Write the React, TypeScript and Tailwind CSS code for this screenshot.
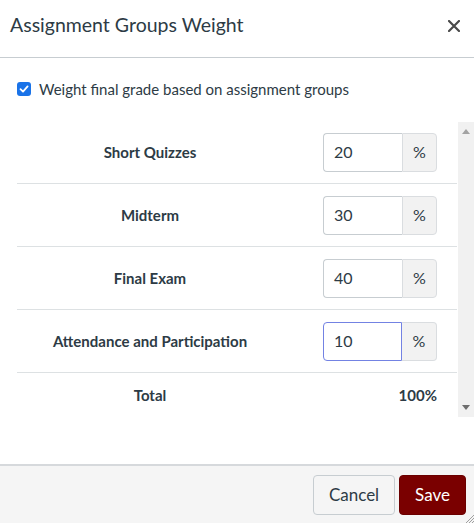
import React from "react";

const groups = [
  { name: "Short Quizzes", weight: "20" },
  { name: "Midterm", weight: "30" },
  { name: "Final Exam", weight: "40" },
  { name: "Attendance and Participation", weight: "10", focused: true },
];

function WeightInput({ value, focused }: { value: string; focused?: boolean }) {
  return (
    <div className="flex h-[39px]">
      <div
        className={
          focused
            ? "w-[79px] flex items-center pl-[10px] rounded-l-[4px] border border-[#7382e3] bg-white text-[16px] text-[#2d3b45]"
            : "w-[79px] flex items-center pl-[10px] rounded-l-[4px] border border-r-0 border-[#c7cdd1] bg-white text-[16px] text-[#2d3b45]"
        }
      >
        {value}
      </div>
      <div
        className={
          focused
            ? "w-[35px] flex items-center justify-center rounded-r-[4px] border border-l-0 border-[#dadde0] bg-[#f2f2f2] text-[16px] text-[#2d3b45]"
            : "w-[35px] flex items-center justify-center rounded-r-[4px] border border-[#dadde0] bg-[#f2f2f2] text-[16px] text-[#2d3b45]"
        }
      >
        %
      </div>
    </div>
  );
}

export default function App() {
  return (
    <div
      className="relative w-[474px] h-[523px] bg-white flex flex-col overflow-hidden text-[#2d3b45]"
      style={{ fontFamily: "Lato, 'Noto Sans', sans-serif" }}
    >
      {/* header */}
      <div className="h-[58px] shrink-0 flex items-start justify-between border-b border-[#c7cdd1] pl-[10px] pr-[14px] pt-[10px]">
        <h2 className="text-[19.5px] leading-[30px] font-normal">Assignment Groups Weight</h2>
        <svg width="12" height="12" viewBox="0 0 12 12" className="mt-[10px]">
          <path d="M1 1L11 11M11 1L1 11" stroke="#4a4a4a" strokeWidth="2.2" strokeLinecap="round" />
        </svg>
      </div>

      {/* checkbox */}
      <div className="h-[63px] shrink-0 flex items-center pl-[17px] pb-[1px]">
        <span className="w-[14px] h-[14px] rounded-[3px] bg-[#1a73e8] flex items-center justify-center">
          <svg width="10" height="10" viewBox="0 0 10 10">
            <path d="M1.5 5.2L4 7.6L8.6 2.4" stroke="white" strokeWidth="1.8" fill="none" strokeLinecap="round" strokeLinejoin="round" />
          </svg>
        </span>
        <span className="ml-[8px] text-[15px]">Weight final grade based on assignment groups</span>
      </div>

      {/* table with scrollbar */}
      <div className="flex h-[296px] shrink-0">
        <div className="w-[457px] pl-[17px]">
          {groups.map((g) => (
            <div key={g.name} className="h-[63px] flex items-center border-b border-[#dde1e3]">
              <div className="w-[266px] text-center font-bold text-[15px]">{g.name}</div>
              <div className="flex-1 flex justify-end pr-[20px]">
                <WeightInput value={g.weight} focused={g.focused} />
              </div>
            </div>
          ))}
          <div className="h-[44px] flex items-center">
            <div className="w-[266px] text-center font-bold text-[15px]">Total</div>
            <div className="flex-1 text-right pr-[20px] font-bold text-[15px]">100%</div>
          </div>
        </div>
        <div className="ml-[1px] mt-[1px] w-[16px] bg-[#f1f1f1] flex flex-col items-center justify-between py-[7px]">
          <svg width="8" height="5" viewBox="0 0 8 5">
            <path d="M0 5L4 0L8 5Z" fill="#a3a3a3" />
          </svg>
          <svg width="8" height="5" viewBox="0 0 8 5">
            <path d="M0 0L8 0L4 5Z" fill="#6e6e6e" />
          </svg>
        </div>
      </div>

      <div className="flex-1" />

      {/* footer */}
      <div className="h-[59px] shrink-0 border-t-2 border-[#d6d9dc] bg-[#f5f5f5] flex items-center justify-end gap-[4px] pr-[8px]">
        <button className="h-[40px] w-[82px] rounded-[4px] border border-[#c7cdd1] bg-[#f5f5f5] text-[17px] text-[#2d3b45]">
          Cancel
        </button>
        <button className="h-[40px] w-[67px] rounded-[4px] border border-[#6b0000] bg-[#7a0000] text-[17px] text-white">
          Save
        </button>
      </div>

      <svg width="10" height="10" viewBox="0 0 10 10" className="absolute right-0 bottom-0">
        <path d="M10 2L2 10M10 5L5 10M10 8L8 10" stroke="#8a8a8a" strokeWidth="0.8" />
      </svg>
    </div>
  );
}
